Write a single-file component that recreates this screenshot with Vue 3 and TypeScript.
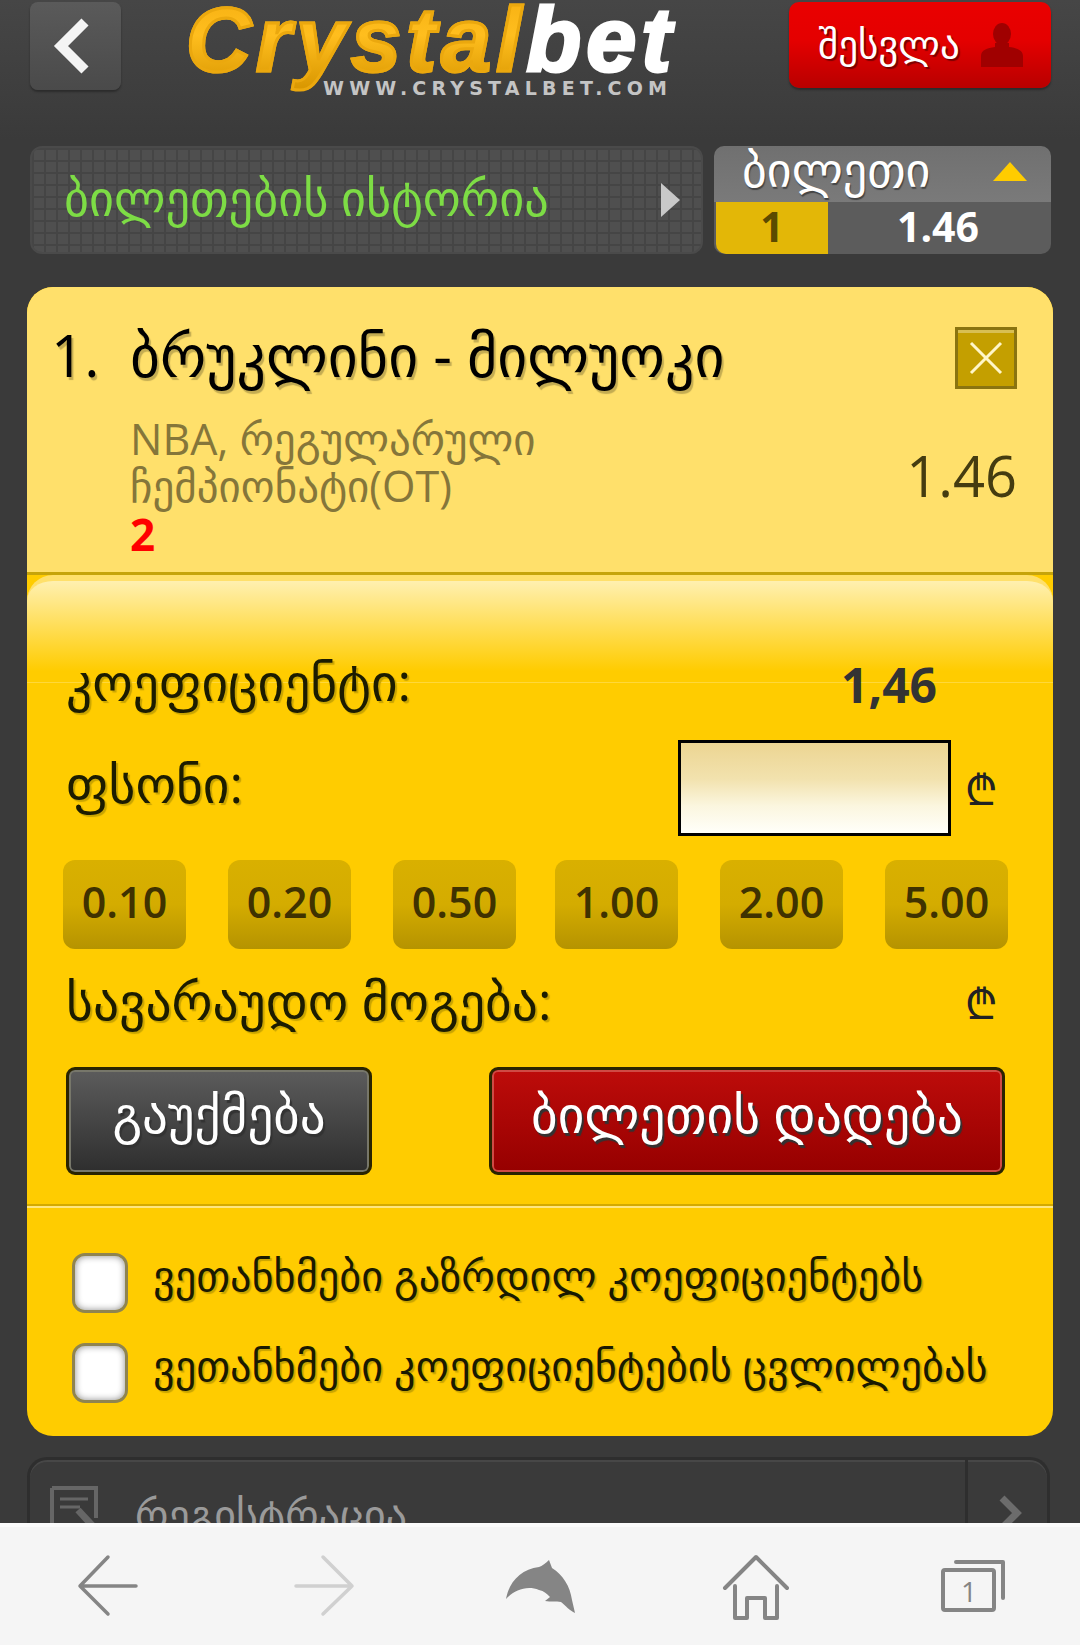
<script setup lang="ts">
const amounts: string[] = ['0.10', '0.20', '0.50', '1.00', '2.00', '5.00']
const agreements: string[] = ['ვეთანხმები გაზრდილ კოეფიციენტებს', 'ვეთანხმები კოეფიციენტების ცვლილებას']
</script>

<template>
  <div class="screen">
    <main class="page">
      <header class="top-bar">
        <button class="back">
          <svg width="46" height="60" viewBox="0 0 46 60"><path d="M36 6 12 30l24 24" fill="none" stroke="#f4f4f4" stroke-width="10" /></svg>
        </button>
        <div class="logo">
          <div class="logo-name"><span class="crystal">Crystal</span><span class="logo-bet">bet</span></div>
          <div class="logo-url">WWW.CRYSTALBET.COM</div>
        </div>
        <button class="login">
          <span class="login-text">შესვლა</span>
          <svg width="44" height="44" viewBox="0 0 44 44"><ellipse cx="22" cy="11" rx="9" ry="11" fill="#a00000" /><path d="M15 20h14v4c8 1 14 3 14 9v11H1V33c0-6 6-8 14-9z" fill="#a00000" /></svg>
        </button>
      </header>

      <section class="nav-row">
        <div class="history">
          <span class="history-text">ბილეთების ისტორია</span>
          <i class="play"></i>
        </div>
        <div class="ticket">
          <div class="ticket-head"><span class="ticket-title">ბილეთი</span><i class="tri"></i></div>
          <div class="ticket-foot"><b class="count">1</b><b class="sum">1.46</b></div>
        </div>
      </section>

      <section class="card">
        <div class="event">
          <div class="title-row">
            <div class="title"><span class="num">1.</span><span>ბრუკლინი - მილუოკი</span></div>
            <div class="close">
              <svg width="40" height="40" viewBox="0 0 40 40"><path d="M5 5l30 30M35 5 5 35" stroke="#fff6c8" stroke-width="3" /></svg>
            </div>
          </div>
          <div class="meta">
            <div class="league">
              <div>NBA, რეგულარული</div>
              <div>ჩემპიონატი(OT)</div>
              <div class="pick">2</div>
            </div>
            <div class="odd">1.46</div>
          </div>
        </div>

        <div class="slip">
          <div class="row">
            <span class="label">კოეფიციენტი:</span>
            <b class="coef">1,46</b>
          </div>
          <div class="row stake">
            <span class="label">ფსონი:</span>
            <div class="input"></div>
            <span class="lari">₾</span>
          </div>
          <div class="amounts">
            <div v-for="a in amounts" :key="a" class="amount">{{ a }}</div>
          </div>
          <div class="row win">
            <span class="label">სავარაუდო მოგება:</span>
            <span class="lari">₾</span>
          </div>
          <div class="actions">
            <div class="btn cancel">გაუქმება</div>
            <div class="btn place">ბილეთის დადება</div>
          </div>
        </div>

        <div class="agree">
          <label v-for="t in agreements" :key="t" class="check-row">
            <i class="check"></i>
            <span class="check-text">{{ t }}</span>
          </label>
        </div>
      </section>

      <section class="reg">
        <svg class="reg-icon" width="54" height="64" viewBox="0 0 54 64">
          <path d="M2 2h44v30M2 2v50h22" fill="none" stroke="#666" stroke-width="4" />
          <path d="M10 13h28M10 21h20" stroke="#666" stroke-width="3" />
          <path d="M28 24l24 26" stroke="#666" stroke-width="7" />
        </svg>
        <span class="reg-text">რეგისტრაცია</span>
        <div class="reg-arrow">
          <svg width="30" height="40" viewBox="0 0 30 40"><path d="M6 5l15 15L6 35" fill="none" stroke="#6c6c6c" stroke-width="7" /></svg>
        </div>
      </section>
    </main>

    <nav class="browser">
      <svg class="nudge-right" width="80" height="80" viewBox="0 0 80 80"><path d="M36 11 8 40l28 28M8 40h56" fill="none" stroke="#858585" stroke-width="3.5" stroke-linecap="round" stroke-linejoin="round" /></svg>
      <svg class="nudge-left" width="80" height="80" viewBox="0 0 80 80"><path d="M43 11l29 29-29 28M72 40H16" fill="none" stroke="#d0d0d0" stroke-width="3.5" stroke-linecap="round" stroke-linejoin="round" /></svg>
      <svg width="80" height="80" viewBox="0 0 80 80"><path d="M6 53C9 36 21 23 39 21c3-1 7-4 10-7l3 8c11 7 18 18 20 32l3 13c-5-2-10-8-14-11-5-1-10 0-16-1l5-4c-3-3-6-6-11-7-12-5-25 0-33 9z" fill="#858585" /></svg>
      <svg width="80" height="80" viewBox="0 0 80 80"><path d="M9 42 40 11l31 31M19 40v32h12V52h18v20h12V40" fill="none" stroke="#858585" stroke-width="4" stroke-linecap="round" stroke-linejoin="round" /></svg>
      <svg width="80" height="80" viewBox="0 0 80 80"><path d="M24 16h47v36" fill="none" stroke="#858585" stroke-width="4" stroke-linecap="round" stroke-linejoin="round" /><rect x="11" y="24" width="51" height="40" rx="2" fill="none" stroke="#858585" stroke-width="4" /><text x="37" y="56" text-anchor="middle" class="tab-num">1</text></svg>
    </nav>
  </div>
</template>

<style>
html, body { margin: 0; background: #3a3a3a; }
</style>

<style scoped>
.screen { width: 1080px; height: 1645px; display: flex; flex-direction: column; overflow: hidden; font-family: "Open Sans", "DejaVu Sans", sans-serif; }
.page { flex: 1; min-height: 0; overflow: hidden; padding: 2px 27px 0; background: linear-gradient(#464646, #3a3a3a 140px); box-sizing: border-box; }

.top-bar { height: 88px; display: flex; align-items: flex-start; padding: 0 2px 0 3px; }
.back { width: 91px; height: 88px; padding: 0 8px 0 0; display: flex; align-items: center; justify-content: center; border: 0; border-radius: 8px; background: linear-gradient(#5a5a5a, #4a4a4a); box-shadow: 0 2px 2px #2c2c2c; }
.logo { width: 496px; margin: 3px 0 0 65px; position: relative; height: 96px; }
.logo-name { font-family: "Liberation Sans", sans-serif; font-weight: 700; font-style: italic; font-size: 90px; line-height: 70px; letter-spacing: 5px; white-space: nowrap; }
.crystal { background: linear-gradient(#f5ae10, #ffbe1e 45%, #d89600); -webkit-background-clip: text; background-clip: text; color: transparent; -webkit-text-stroke: 3px #eba80e; }
.logo-bet { color: #fff; -webkit-text-stroke: 3px #fff; }
.logo-url { position: absolute; left: 137px; top: 72px; font-family: "DejaVu Sans", sans-serif; font-weight: 700; font-size: 19px; line-height: 22px; letter-spacing: 5.2px; color: #c4c4c4; white-space: nowrap; }
.login { margin-left: auto; width: 262px; height: 86px; padding: 0 27px 0 29px; display: flex; align-items: center; justify-content: space-between; border: 0; border-radius: 10px; background: linear-gradient(#ea0000, #e40000 45%, #b80000); box-shadow: 0 2px 2px #2c2c2c; color: #fff; font-family: inherit; font-size: 39px; text-shadow: 2px 2px 1px #7c0000; }
.login-text { padding-bottom: 6px; }

.nav-row { margin-top: 56px; padding: 0 2px 0 3px; height: 108px; display: flex; justify-content: space-between; }
.history { width: 673px; box-sizing: border-box; display: flex; align-items: center; justify-content: space-between; padding: 0 21px 0 32px; border: 2px solid #4a4a4a; border-radius: 12px; color: #7ddc45; font-size: 48.3px; background-color: #4f4f4f; background-image: repeating-linear-gradient(90deg, #454545 0 2px, transparent 2px 12px), repeating-linear-gradient(#454545 0 2px, transparent 2px 12px); }
.history-text { padding-bottom: 6px; }
.play { width: 0; height: 0; border-left: 19px solid #c8c8c8; border-top: 17px solid transparent; border-bottom: 17px solid transparent; }
.ticket { width: 337px; border-radius: 10px; overflow: hidden; color: #fff; }
.ticket-head { height: 56px; box-sizing: border-box; padding: 0 24px 0 28px; display: flex; align-items: center; justify-content: space-between; font-size: 48px; line-height: 56px; background: linear-gradient(#707070, #7a7a7a); text-shadow: 1px 2px 1px #444; }
.ticket-title { padding-bottom: 10px; }
.tri { width: 0; height: 0; margin-bottom: 6px; border-bottom: 19px solid #ffcc00; border-left: 17px solid transparent; border-right: 17px solid transparent; }
.ticket-foot { height: 52px; display: flex; background: #5c5c5c; font-size: 41px; }
.count { width: 112px; margin-left: 2px; background: #e3b707; color: #5b4a00; display: flex; align-items: center; justify-content: center; border-bottom-left-radius: 10px; padding-bottom: 4px; box-sizing: border-box; }
.sum { flex: 1; display: flex; align-items: center; justify-content: center; padding-bottom: 4px; padding-right: 3px; }

.card { margin-top: 33px; border-radius: 26px; overflow: hidden; background: #ffcc00; }
.event { height: 288px; box-sizing: border-box; padding: 40px 36px 0 24px; background: #ffe06b; border-bottom: 3px solid #c6a40a; }
.title-row { display: flex; align-items: center; justify-content: space-between; height: 62px; }
.title { display: flex; font-size: 58px; line-height: 62px; padding-bottom: 6px; color: #000; text-shadow: 2px 3px 1px #c4ac52; white-space: nowrap; }
.num { width: 79px; }
.close { width: 62px; height: 62px; box-sizing: border-box; border: 3px solid #8a7410; background: #c49f00; display: flex; align-items: center; justify-content: center; box-shadow: inset 0 3px 0 #d8bf52; }
.meta { margin-top: 26px; display: flex; justify-content: space-between; align-items: center; }
.league { padding-left: 79px; font-size: 43px; line-height: 47px; color: #85763a; white-space: nowrap; }
.pick { color: #f00; font-weight: 700; font-size: 44px; margin-top: 2px; }
.odd { font-size: 56px; line-height: 70px; color: #453c10; margin-bottom: 24px; }

.slip { padding: 75px 45px 29px 36px; border-radius: 26px 26px 0 0; background: linear-gradient(#fff0b0, #ffcc00 90px, #ffcc00 101px, #ffd83a 101px, #ffd83a 102px, #ffcc00 102px); border-top: 6px solid #ffe06b; background-origin: padding-box; }
.row { display: flex; align-items: center; height: 60px; padding-left: 3px; font-size: 51.5px; color: #1c1c00; }
.label { flex: 1; padding-bottom: 10px; text-shadow: 2px 2px 1px #c9a400; white-space: nowrap; }
.coef { width: 167px; color: #333; font-size: 48px; padding-bottom: 4px; }
.stake { height: 96px; margin-top: 24px; }
.input { width: 273px; height: 96px; box-sizing: border-box; border: 3px solid #000; background: linear-gradient(#ecd592, #f2e2ae 40%, #fbf6df 70%, #fffffa); }
.lari { width: 43px; margin-left: 14px; font-family: "Noto Sans", "DejaVu Sans", sans-serif; font-size: 42px; color: #222; }
.amounts { margin-top: 24px; display: flex; gap: 42px; }
.amount { width: 123px; height: 89px; padding-bottom: 6px; box-sizing: border-box; display: flex; align-items: center; justify-content: center; border-radius: 12px; background: linear-gradient(#d9b000, #d4ac00 50%, #b59300); color: #3f3200; font-size: 43px; font-weight: 600; }
.amount:nth-child(4) { margin-left: -3px; }
.win { margin-top: 23px; }
.win .label { padding-bottom: 4px; }
.win .lari { margin-left: 0; }
.actions { margin-top: 35px; padding: 0 3px; display: flex; justify-content: space-between; }
.btn { height: 108px; padding-bottom: 16px; box-sizing: border-box; display: flex; align-items: center; justify-content: center; border: 3px solid #2a2400; border-radius: 9px; color: #fff; font-size: 51px; text-shadow: 2px 3px 1px #333; }
.cancel { width: 306px; background: linear-gradient(#5c5c5c, #2e2e2e); box-shadow: inset 0 0 0 2px #77776a; }
.place { width: 516px; background: linear-gradient(#bd0c0a, #960000); box-shadow: inset 0 0 0 2px #cf4a44; font-size: 51.5px; }

.agree { padding: 47px 30px 33px 45px; border-top: 2px solid #d4aa00; box-shadow: inset 0 2px 0 #ffe680; display: flex; flex-direction: column; gap: 30px; }
.check-row { height: 60px; display: flex; align-items: center; gap: 25px; font-size: 42.3px; color: #1a1a00; text-shadow: 2px 2px 1px #c9a400; white-space: nowrap; }
.check-text { padding-bottom: 18px; }
.check { width: 56px; height: 60px; box-sizing: border-box; border: 3px solid #8f8450; border-radius: 13px; background: #fff; box-shadow: inset 0 0 7px #8c8c8c; flex: none; }

.reg { margin-top: 21px; width: 1023px; height: 100px; box-sizing: border-box; display: flex; align-items: flex-start; border: 3px solid #2e2e2e; border-bottom: 0; border-radius: 20px 20px 0 0; box-shadow: inset 0 2px 0 #474747; color: #9a9a9a; }
.reg-icon { margin: 26px 0 0 20px; flex: none; }
.reg-text { flex: 1; margin: 25px 0 0 31px; font-size: 42px; }
.reg-arrow { width: 82px; height: 100%; box-sizing: border-box; border-left: 3px solid #2e2e2e; padding: 33px 0 0 28px; }

.browser { height: 122px; flex: none; display: grid; grid-template-columns: repeat(5, 1fr); justify-items: center; align-items: center; background: #f5f5f5; border-top: 4px solid #fbfbfb; box-sizing: border-box; }
.nudge-right { margin-left: 8px; }
.nudge-left { margin-right: 8px; }
.tab-num { font-family: "Open Sans", sans-serif; font-size: 28px; fill: #858585; }
</style>
